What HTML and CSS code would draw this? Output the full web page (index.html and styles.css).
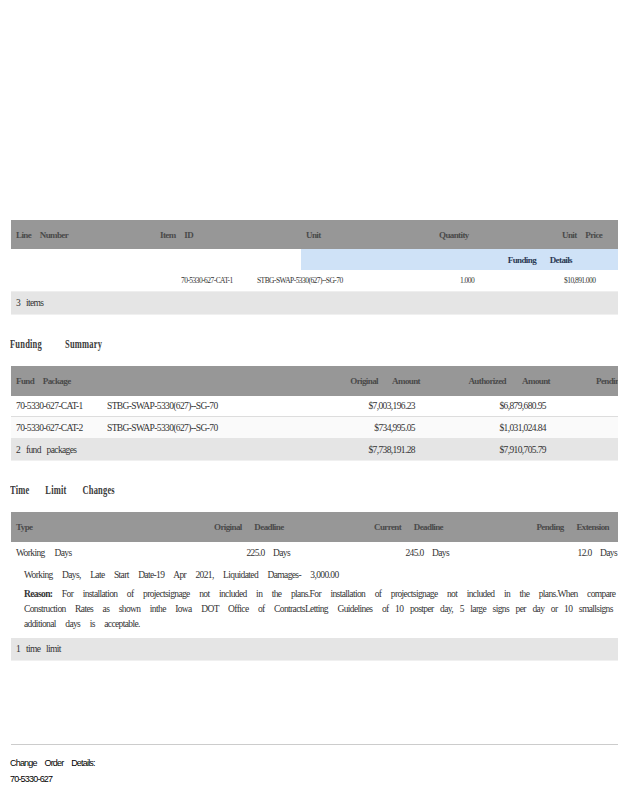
FILE: index.html
```html
<!DOCTYPE html>
<html lang="en">
<head>
<meta charset="utf-8">
<title>Change Order Details</title>
<link rel="stylesheet" href="styles.css">
</head>
<body>
<main class="page">
  <section class="panel items">
    <div class="row head items-cols">
      <span>Line Number</span><span>Item ID</span><span>Unit</span><span>Quantity</span><span>Unit Price</span>
    </div>
    <div class="subhead"><span>Funding Details</span></div>
    <div class="row item items-data">
      <span>70-5330-627-CAT-1</span><span>STBG-SWAP-5330(627)--SG-70</span><span>1.000</span><span>$10,891.000</span>
    </div>
    <div class="row foot"><span>3 items</span></div>
  </section>

  <h2 class="title funding-title">Funding Summary</h2>
  <section class="panel funding">
    <div class="row head fund-cols">
      <span>Fund Package</span><span class="end">Original Amount</span><span class="end">Authorized Amount</span><span>Pending Amount</span>
    </div>
    <div class="row body fund-data first">
      <span>70-5330-627-CAT-1</span><span>STBG-SWAP-5330(627)--SG-70</span><span class="end">$7,003,196.23</span><span class="end">$6,879,680.95</span>
    </div>
    <div class="row body fund-data alt">
      <span>70-5330-627-CAT-2</span><span>STBG-SWAP-5330(627)--SG-70</span><span class="end">$734,995.05</span><span class="end">$1,031,024.84</span>
    </div>
    <div class="row foot fund-foot">
      <span>2 fund packages</span><span class="end">$7,738,191.28</span><span class="end">$7,910,705.79</span>
    </div>
  </section>

  <h2 class="title time-title">Time Limit Changes</h2>
  <section class="panel time">
    <div class="row head time-cols">
      <span>Type</span><span class="end">Original Deadline</span><span class="end">Current Deadline</span><span class="end">Pending Extension</span>
    </div>
    <div class="row body time-data">
      <span>Working Days</span><span class="end">225.0 Days</span><span class="end">245.0 Days</span><span class="end">12.0 Days</span>
    </div>
    <div class="detail">
      <p class="detail-title">Working Days, Late Start Date-19 Apr 2021, Liquidated Damages- 3,000.00</p>
      <p class="reason"><b>Reason:</b> For installation of projectsignage not included in the plans.For installation of projectsignage not included in the plans.When compare<br>Construction Rates as shown inthe Iowa DOT Office of ContractsLetting Guidelines <span class="tight">of 10 postper day, 5 large signs per day or 10 smallsigns</span><br>additional days is acceptable.</p>
    </div>
    <div class="row foot"><span>1 time limit</span></div>
  </section>

  <footer class="details">
    <p>Change Order Details:</p>
    <p>70-5330-627</p>
  </footer>
</main>
</body>
</html>
```

FILE: styles.css
```css
html, body {
  margin: 0;
  padding: 0;
  background: #fff;
  overflow: hidden;
}

.page {
  box-sizing: border-box;
  width: 618px;
  height: 800px;
  padding: 220px 0 0 11px;
  overflow: hidden;
  font-family: "Liberation Serif", "Times New Roman", serif;
  font-size: 9.5px;
  letter-spacing: -0.62px;
  word-spacing: 8px;
  color: #333;
}

.panel {
  width: 607px;
}

.row {
  display: grid;
  align-items: center;
  white-space: nowrap;
  padding-left: 5px;
}

.end {
  text-align: right;
}

.head {
  height: 29px;
  background: #979797;
  color: #4a4a4a;
  font-weight: bold;
  font-size: 9px;
  letter-spacing: -0.6px;
  word-spacing: 7px;
}

.items-cols {
  grid-template-columns: 144px 146px 133px 123px 45px;
}

.subhead {
  height: 21px;
  margin-left: 290px;
  padding-right: 46px;
  display: flex;
  align-items: center;
  justify-content: flex-end;
  background: #cfe2f7;
  color: #2c3a55;
  font-weight: bold;
  font-size: 9px;
  letter-spacing: -0.6px;
  word-spacing: 12px;
}

.item {
  height: 21px;
  font-size: 7.5px;
  word-spacing: 2px;
  letter-spacing: -0.55px;
  grid-template-columns: 76px 203px 104px 60px;
  padding-left: 170px;
  border-bottom: 1px solid #eee;
}

.foot {
  height: 22px;
  background: #e5e5e5;
  border-bottom: 1px solid #f0f0f0;
  box-sizing: content-box;
  word-spacing: 4px;
}

.title {
  margin: 0;
  font-size: 13px;
  font-weight: bold;
  letter-spacing: 0.3px;
  color: #3a3a3a;
  line-height: 14px;
  margin-left: -1px;
  white-space: nowrap;
  transform: scaleX(0.65);
  transform-origin: left center;
}

.funding-title {
  margin-top: 22px;
  margin-bottom: 15px;
  word-spacing: 32px;
}

.time-title {
  margin-top: 22px;
  margin-bottom: 15px;
  word-spacing: 21px;
}

.funding .head {
  height: 30px;
}

.fund-cols {
  grid-template-columns: 70px 334px 130px 46px 80px;
}

.fund-cols span:first-child {
  grid-column: 1 / 2;
}

.fund-cols span:nth-child(2) {
  grid-column: 1 / 3;
  justify-self: end;
}

.fund-cols span:first-child,
.fund-cols span:nth-child(2) {
  grid-row: 1;
}

.fund-cols span:nth-child(3) {
  grid-column: 3;
}

.fund-cols span:nth-child(4) {
  grid-column: 5;
}

.funding .fund-cols span:nth-child(2) {
  word-spacing: 13px;
}

.funding .fund-cols span:nth-child(3) {
  word-spacing: 15px;
}

.body {
  height: 20px;
}

.fund-data {
  grid-template-columns: 91px 190px 118px 131px;
}

.first {
  border-bottom: 1px solid #ddd;
}

.alt {
  height: 21px;
  background: #fafafa;
}

.fund-foot {
  height: 21px;
  padding-top: 1px;
  grid-template-columns: 281px 118px 131px;
}

.time .head {
  height: 30px;
  word-spacing: 11px;
}

.time-cols {
  grid-template-columns: 198px 69px 160px 166px;
}

.time-data {
  height: 21px;
  grid-template-columns: 200px 74px 159px 168px;
}

.time-data .end {
  word-spacing: 6.5px;
}

.detail {
  padding: 0 0 6px 13px;
  white-space: nowrap;
}

.detail p {
  margin: 0;
}

.detail-title {
  line-height: 14px;
  padding-top: 5px;
  padding-bottom: 5px;
  word-spacing: 7.6px;
}

.reason {
  line-height: 15px;
  word-spacing: 7.7px;
}

.tight {
  word-spacing: 4.8px;
}

.details {
  margin-top: 83px;
  border-top: 1px solid #ccc;
  padding-top: 13px;
  font-family: "Liberation Sans", Arial, sans-serif;
  font-size: 9px;
  letter-spacing: -0.8px;
  word-spacing: 6px;
  color: #000;
}

.details p {
  margin: 0 0 5px -1px;
  line-height: 11px;
}
```
